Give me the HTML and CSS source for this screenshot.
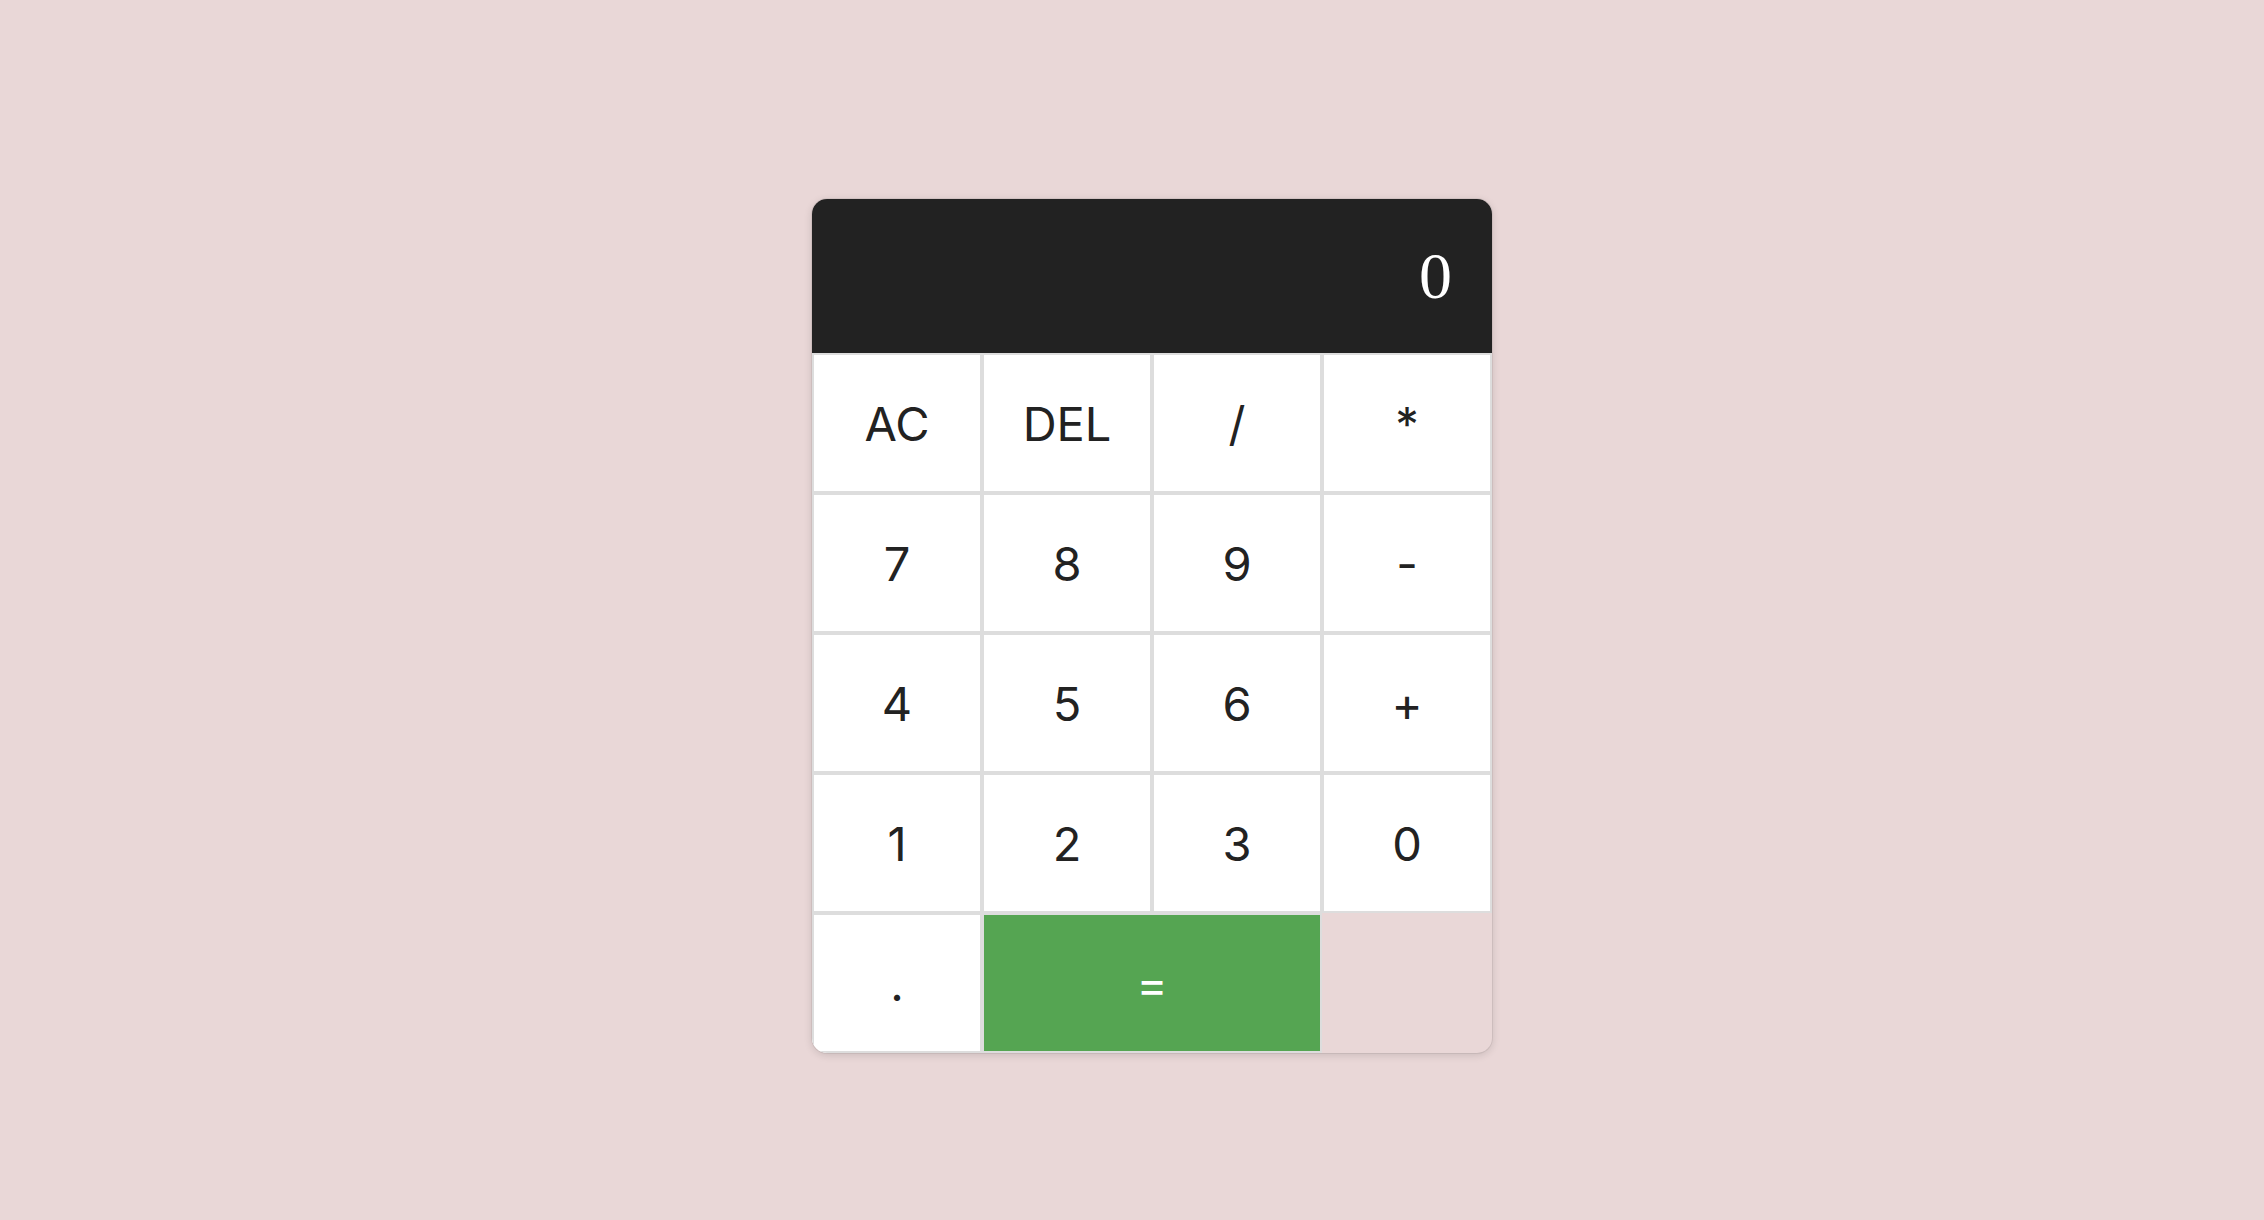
FILE: index.html
```html
<!DOCTYPE html>
<html lang="en">
<head>
<meta charset="utf-8">
<title>Calculator</title>
<link rel="stylesheet" href="styles.css">
</head>
<body>
<div class="page">
  <div class="calc">
    <div class="display"><div class="current">0</div></div>
    <button class="key">AC</button>
    <button class="key">DEL</button>
    <button class="key">/</button>
    <button class="key">*</button>
    <button class="key">7</button>
    <button class="key">8</button>
    <button class="key">9</button>
    <button class="key">-</button>
    <button class="key">4</button>
    <button class="key">5</button>
    <button class="key">6</button>
    <button class="key">+</button>
    <button class="key">1</button>
    <button class="key">2</button>
    <button class="key">3</button>
    <button class="key">0</button>
    <button class="key">.</button>
    <button class="key equals">=</button>
  </div>
</div>
</body>
</html>
```

FILE: styles.css
```css
html, body {
  margin: 0;
  padding: 0;
  background: #e9d7d7;
}
.page {
  display: flex;
  justify-content: center;
  align-items: flex-start;
  padding-top: 199px;
  padding-left: 40px;
  min-height: 1220px;
  box-sizing: border-box;
}
.calc {
  display: grid;
  grid-template-columns: repeat(4, 170px);
  grid-template-rows: 154px repeat(5, 140px);
  border-radius: 15px;
  overflow: hidden;
  box-shadow: 0 0 0 1px rgba(0,0,0,0.06), 0 2px 8px rgba(0,0,0,0.14);
}
.display {
  grid-column: 1 / -1;
  background: #222222;
  color: #ffffff;
  display: flex;
  align-items: center;
  justify-content: flex-end;
  padding: 0 40px;
}
.current {
  font-family: "Liberation Serif", "Times New Roman", serif;
  font-size: 66px;
  line-height: 1;
}
.key {
  box-sizing: border-box;
  margin: 0;
  padding: 0;
  border: 2px solid #dddddd;
  background: #ffffff;
  color: #222222;
  font-family: Inter, "Liberation Sans", sans-serif;
  font-size: 47px;
  font-weight: 400;
  cursor: pointer;
}
.equals {
  grid-column: span 2;
  background: #55a552;
  color: #ffffff;
}
```
